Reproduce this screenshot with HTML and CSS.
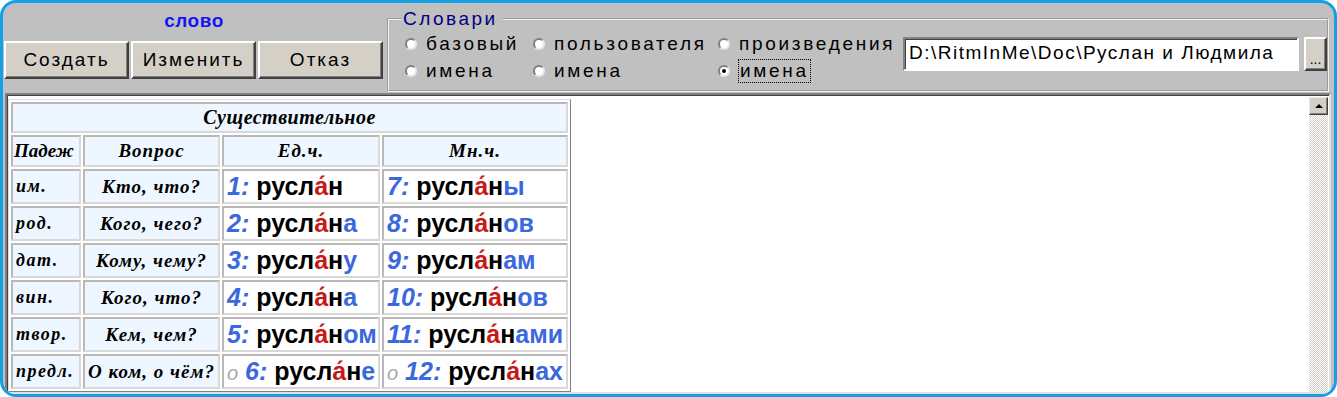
FILE: index.html
```html
<!DOCTYPE html>
<html lang="ru">
<head>
    <meta charset="UTF-8">
    <title>Склонение</title>
    <link rel="stylesheet" href="styles.css">
</head>
<body>
    <div class="window">
        <div class="toolbar">
            <div class="word">
                <div class="word-title">слово</div>
                <div class="word-buttons">
                    <button class="btn">Создать</button>
                    <button class="btn">Изменить</button>
                    <button class="btn">Отказ</button>
                </div>
            </div>
            <fieldset class="dicts">
                <legend>Словари</legend>
                <div class="dicts-body">
                    <div class="radios">
                        <label class="radio"><span class="dot"></span>базовый</label>
                        <label class="radio"><span class="dot"></span>пользователя</label>
                        <label class="radio"><span class="dot"></span>произведения</label>
                        <label class="radio"><span class="dot"></span>имена</label>
                        <label class="radio"><span class="dot"></span>имена</label>
                        <label class="radio checked"><span class="dot"></span><span class="focus">имена</span></label>
                    </div>
                    <div class="path">
                        <div class="path-input">D:\RitmInMe\Doc\Руслан и Людмила</div>
                        <button class="btn btn-more">...</button>
                    </div>
                </div>
            </fieldset>
        </div>
        <div class="content">
            <table class="decl">
                <colgroup>
                    <col class="col-case">
                    <col class="col-question">
                    <col class="col-single">
                    <col class="col-plural">
                </colgroup>
                <tr class="row-title">
                    <td colspan="4" class="script">Существительное</td>
                </tr>
                <tr class="row-head">
                    <td class="script case">Падеж</td>
                    <td class="script">Вопрос</td>
                    <td class="script">Ед.ч.</td>
                    <td class="script">Мн.ч.</td>
                </tr>
                <tr class="row-data">
                    <td class="script case">им.</td>
                    <td class="script">Кто, что?</td>
                    <td class="form"><i class="num">1:</i> <b>русл<span class="stress">а́</span>н</b></td>
                    <td class="form"><i class="num">7:</i> <b>русл<span class="stress">а́</span>н<span class="end">ы</span></b></td>
                </tr>
                <tr class="row-data">
                    <td class="script case">род.</td>
                    <td class="script">Кого, чего?</td>
                    <td class="form"><i class="num">2:</i> <b>русл<span class="stress">а́</span>н<span class="end">а</span></b></td>
                    <td class="form"><i class="num">8:</i> <b>русл<span class="stress">а́</span>н<span class="end">ов</span></b></td>
                </tr>
                <tr class="row-data">
                    <td class="script case">дат.</td>
                    <td class="script">Кому, чему?</td>
                    <td class="form"><i class="num">3:</i> <b>русл<span class="stress">а́</span>н<span class="end">у</span></b></td>
                    <td class="form"><i class="num">9:</i> <b>русл<span class="stress">а́</span>н<span class="end">ам</span></b></td>
                </tr>
                <tr class="row-data">
                    <td class="script case">вин.</td>
                    <td class="script">Кого, что?</td>
                    <td class="form"><i class="num">4:</i> <b>русл<span class="stress">а́</span>н<span class="end">а</span></b></td>
                    <td class="form"><i class="num">10:</i> <b>русл<span class="stress">а́</span>н<span class="end">ов</span></b></td>
                </tr>
                <tr class="row-data">
                    <td class="script case">твор.</td>
                    <td class="script">Кем, чем?</td>
                    <td class="form"><i class="num">5:</i> <b>русл<span class="stress">а́</span>н<span class="end">ом</span></b></td>
                    <td class="form"><i class="num">11:</i> <b>русл<span class="stress">а́</span>н<span class="end">ами</span></b></td>
                </tr>
                <tr class="row-data">
                    <td class="script case">предл.</td>
                    <td class="script">О ком, о чём?</td>
                    <td class="form"><i class="mark">o</i> <i class="num">6:</i> <b>русл<span class="stress">а́</span>н<span class="end">е</span></b></td>
                    <td class="form"><i class="mark">o</i> <i class="num">12:</i> <b>русл<span class="stress">а́</span>н<span class="end">ах</span></b></td>
                </tr>
            </table>
            <div class="scrollbar">
                <div class="scroll-up"></div>
            </div>
        </div>
    </div>
</body>
</html>
```

FILE: styles.css
```css
body {
    margin: 0;
    background: #fff;
    font-family: "Liberation Sans", Arial, sans-serif;
}
.window {
    width: 1337px;
    height: 397px;
    box-sizing: border-box;
    border: 3px solid #12a0e6;
    border-radius: 16px;
    background: #c0c0c0;
    overflow: hidden;
    display: flex;
    flex-direction: column;
}
.toolbar {
    height: 90px;
    display: flex;
    flex-shrink: 0;
}
.word {
    width: 380px;
    margin-left: 1px;
}
.word-title {
    height: 38px;
    text-align: center;
    line-height: 36px;
    color: #1414f4;
    font-size: 19px;
    font-weight: bold;
    letter-spacing: 0.5px;
}
.word-buttons {
    display: flex;
    gap: 2px;
}
.btn {
    width: 125px;
    height: 38px;
    padding: 0;
    background: #d4d0c8;
    border: 2px solid;
    border-color: #fff #404040 #404040 #fff;
    box-shadow: inset -1px -1px 0 #808080;
    font-family: "Liberation Sans", Arial, sans-serif;
    font-size: 19px;
    letter-spacing: 2px;
    color: #000;
}
.dicts {
    flex: 1;
    margin: 5px 5px 0 3px;
    padding: 0 0 0 16px;
    height: 84px;
    box-sizing: border-box;
    border: 2px groove #f0f0f0;
}
.dicts legend {
    margin-left: -3px;
    padding: 0 5px 0 1px;
    color: #000080;
    font-size: 19px;
    letter-spacing: 2.5px;
}
.dicts-body {
    display: flex;
    align-items: flex-start;
}
.radios {
    display: grid;
    grid-template-columns: 128px 185px 185px;
    grid-auto-rows: 27px;
}
.radio {
    display: flex;
    align-items: center;
    font-size: 19px;
    letter-spacing: 2.7px;
    color: #000;
}
.dot {
    width: 8px;
    height: 8px;
    border-radius: 50%;
    background: #fff;
    border: 2px solid;
    border-color: #808080 #e8e8e8 #e8e8e8 #808080;
    margin-right: 9px;
    position: relative;
}
.checked .dot::after {
    content: "";
    position: absolute;
    left: 2px;
    top: 2px;
    width: 4px;
    height: 4px;
    border-radius: 50%;
    background: #000;
}
.focus {
    outline: 1px dotted #000;
    padding: 0 1px;
}
.path {
    display: flex;
    gap: 5px;
    margin-top: 7px;
}
.path-input {
    width: 396px;
    height: 34px;
    box-sizing: border-box;
    background: #fff;
    border: 2px solid;
    border-color: #808080 #fff #fff #808080;
    box-shadow: inset 1px 1px 0 #404040;
    padding: 3px 4px;
    font-size: 19px;
    letter-spacing: 1.5px;
    white-space: nowrap;
}
.btn-more {
    width: 23px;
    height: 34px;
    font-size: 14px;
    letter-spacing: 0;
    line-height: 40px;
}
.content {
    flex: 1;
    display: flex;
    align-items: flex-start;
    margin: 0 3px 0 2px;
    padding: 4px 0 0 1px;
    background: #fff;
    border: 2px solid;
    border-color: #808080 #e0e0e0 #e0e0e0 #808080;
    box-shadow: inset 1px 1px 0 #404040;
}
.decl {
    table-layout: fixed;
    width: 563px;
    border-collapse: separate;
    border-spacing: 2px;
    border: 1px solid;
    border-color: #e0e0e0 #808080 #808080 #e0e0e0;
    background: #fff;
}
.col-case {
    width: 70px;
}
.col-question {
    width: 137px;
}
.col-single {
    width: 158px;
}
.col-plural {
    width: 186px;
}
.decl td {
    padding: 0;
    border: 2px solid;
    border-color: #b8b8b8 #d8d8d8 #d8d8d8 #b8b8b8;
    background: #eef7ff;
    text-align: center;
    white-space: nowrap;
    overflow: hidden;
}
.script {
    font-family: "Liberation Serif", "Times New Roman", serif;
    font-style: italic;
    font-weight: bold;
    font-size: 19px;
    letter-spacing: 1px;
}
.row-title {
    height: 31px;
}
.row-title td {
    font-size: 20px;
    letter-spacing: 0.5px;
}
.row-head {
    height: 32px;
}
.row-data {
    height: 35px;
}
.decl td.case {
    text-align: left;
    padding-left: 1px;
    letter-spacing: 0;
}
.row-data td.case {
    font-size: 18px;
    letter-spacing: 1.5px;
    padding-left: 3px;
}
.decl td.form {
    background: #fff;
    text-align: left;
    padding-left: 3px;
    font-family: "Liberation Sans", Arial, sans-serif;
    font-style: normal;
    font-size: 25px;
    letter-spacing: 0;
}
.num {
    color: #3b68dc;
    font-weight: bold;
}
.mark {
    color: #aaa;
    font-size: 20px;
}
.form b {
    color: #000;
}
.stress {
    color: #c81818;
}
.end {
    color: #3b68dc;
}
.scrollbar {
    margin-left: auto;
    align-self: stretch;
    margin-top: -2px;
    width: 19px;
    margin-right: 1px;
    background: repeating-conic-gradient(#d4d0c8 0 25%, #fff 0 50%) 0 0 / 2px 2px;
}
.scroll-up {
    height: 18px;
    box-sizing: border-box;
    background: #d4d0c8;
    border: 1px solid;
    border-color: #e8e8e8 #404040 #404040 #e8e8e8;
    box-shadow: inset -1px -1px 0 #808080;
    position: relative;
}
.scroll-up::after {
    content: "";
    position: absolute;
    left: 5px;
    top: 6px;
    border: 4px solid transparent;
    border-top: 0;
    border-bottom-color: #000;
}
```
